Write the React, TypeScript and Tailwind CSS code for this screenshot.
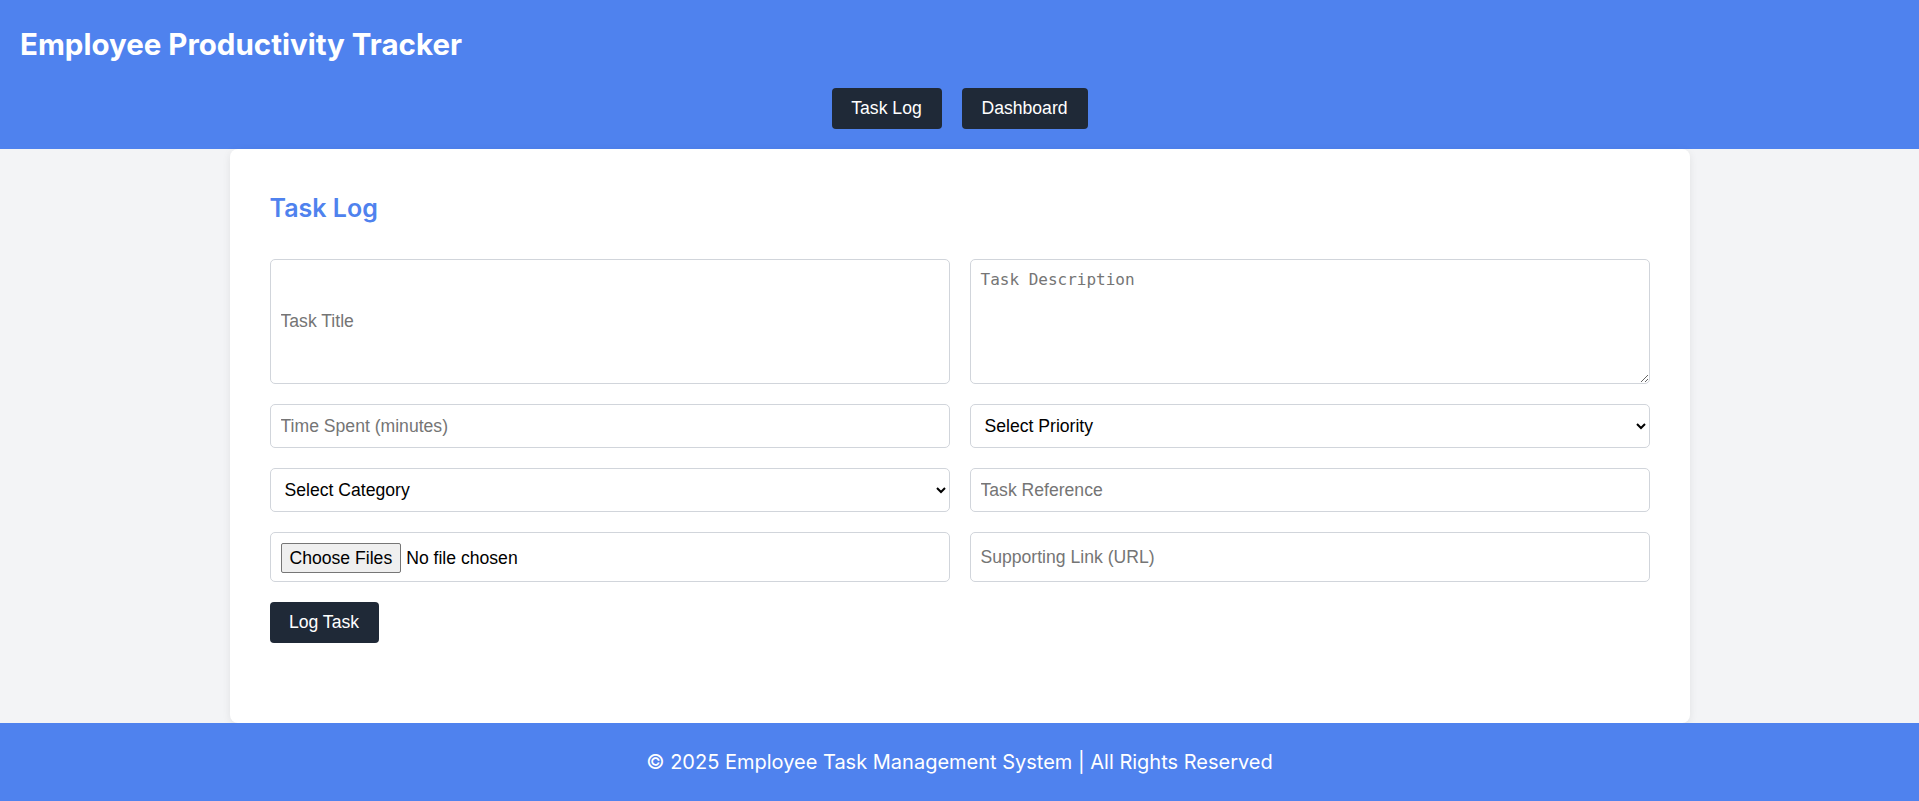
import React from "react";

export default function App() {
  const inputCls =
    "w-full h-[44px] border border-[#d1d5db] rounded-[5px] px-[10px] bg-white text-black text-[17.6px] font-['Liberation_Sans',Arial,sans-serif] placeholder:text-[#757575] outline-none";
  const btnFont = "text-[17.6px] font-['Liberation_Sans',Arial,sans-serif]";
  return (
    <div className="min-h-screen flex flex-col bg-[#f3f4f6] font-['Inter',sans-serif]">
      <header className="bg-[#4f82ee] pt-[26px] pb-[20px]">
        <h1 className="px-[20px] text-[29.5px] leading-[36px] font-bold text-white">
          Employee Productivity Tracker
        </h1>
        <nav className="mt-[26px] flex justify-center gap-[20px]">
          <button className={"h-[41px] w-[110px] rounded-[4px] bg-[#1f2937] text-white " + btnFont}>
            Task Log
          </button>
          <button className={"h-[41px] w-[126px] rounded-[4px] bg-[#1f2937] text-white " + btnFont}>
            Dashboard
          </button>
        </nav>
      </header>

      <main className="flex-1">
        <div className="w-[1460px] mx-auto bg-white rounded-[8px] shadow-[0_2px_8px_rgba(0,0,0,0.08)] px-[40px] pt-[44px] pb-[80px]">
          <h2 className="text-[25px] leading-[30px] font-semibold text-[#4f82ee] mb-[36px]">
            Task Log
          </h2>
          <div className="grid grid-cols-2 gap-x-[20px] gap-y-[20px]">
            <input className={inputCls + " !h-[125px]"} placeholder="Task Title" />
            <textarea
              className="w-full h-[125px] border border-[#d1d5db] rounded-[5px] px-[10px] py-[10px] bg-white text-black text-[16px] leading-[20px] font-['DejaVu_Sans_Mono',monospace] placeholder:text-[#757575] outline-none resize-y"
              placeholder="Task Description"
            />
            <input className={inputCls} placeholder="Time Spent (minutes)" />
            <select className={inputCls} defaultValue="">
              <option value="">Select Priority</option>
              <option>High</option>
              <option>Medium</option>
              <option>Low</option>
            </select>
            <select className={inputCls} defaultValue="">
              <option value="">Select Category</option>
              <option>Development</option>
              <option>Meeting</option>
            </select>
            <input className={inputCls} placeholder="Task Reference" />
            <input
              type="file"
              multiple
              className="w-full h-[50px] border border-[#d1d5db] rounded-[5px] px-[10px] py-[10px] bg-white text-black text-[17.6px] font-['Liberation_Sans',Arial,sans-serif] file:mr-[5px] file:px-[8px] file:py-[1px] file:border file:border-[#767676] file:rounded-[2px] file:bg-[#efefef] file:text-black file:text-[17.6px]"
            />
            <input className={inputCls + " !h-[50px]"} placeholder="Supporting Link (URL)" />
          </div>
          <button className={"mt-[20px] h-[41px] w-[109px] rounded-[4px] bg-[#1f2937] text-white " + btnFont}>
            Log Task
          </button>
        </div>
      </main>

      <footer className="h-[78px] bg-[#4f82ee] flex items-center justify-center text-white text-[20px]">
        © 2025 Employee Task Management System | All Rights Reserved
      </footer>
    </div>
  );
}
